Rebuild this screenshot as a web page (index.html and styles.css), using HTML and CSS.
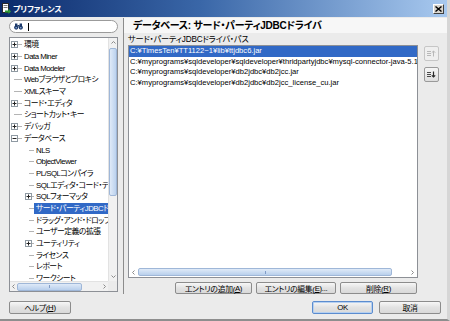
FILE: index.html
```html
<!DOCTYPE html>
<html lang="ja">
<head>
<meta charset="utf-8">
<title>プリファレンス</title>
<link rel="stylesheet" href="styles.css">
</head>
<body>
<div class="window">
  <div class="titlebar">
    <svg class="ticon" width="9" height="11" viewBox="0 0 9 11"><rect x="0.5" y="0.5" width="6" height="9" fill="#fff" stroke="#2a2a2a"/><rect x="1.5" y="2" width="4" height="1" fill="#7a7a7a"/><rect x="1.5" y="4" width="4" height="1" fill="#7a7a7a"/><path d="M3 7.5H6.5V5.5L9 8.5L6.5 11V9.5H3Z" fill="#2f9d37"/></svg>
    <span class="ttext">プリファレンス</span>
    <span class="close"><svg width="7" height="6" viewBox="0 0 7 6"><path d="M0.5 0.5L6.5 5.5M6.5 0.5L0.5 5.5" stroke="#000" stroke-width="1.4"/></svg></span>
  </div>

  <div class="main">
    <div class="left">
      <div class="search">
        <svg class="binoc" width="9" height="7" viewBox="0 0 9 7"><circle cx="2.2" cy="4.6" r="2.1" fill="#1d3a6b"/><circle cx="6.8" cy="4.6" r="2.1" fill="#1d3a6b"/><rect x="1" y="0.5" width="2.4" height="3" fill="#1d3a6b"/><rect x="5.6" y="0.5" width="2.4" height="3" fill="#1d3a6b"/><rect x="3.4" y="2" width="2.2" height="1.6" fill="#1d3a6b"/><circle cx="2.2" cy="4.8" r="0.8" fill="#8fb0e0"/><circle cx="6.8" cy="4.8" r="0.8" fill="#8fb0e0"/></svg>
        <span class="caret"></span>
      </div>
      <div class="tree">
        <div class="rows">
          <div class="row l0"><span class="tw"><svg class="box" viewBox="0 0 7 7"><rect x=".5" y=".5" width="6" height="6" fill="#fff" stroke="#8f9aa3"/><path d="M1.5 3.5h4M3.5 1.5v4" stroke="#222"/></svg><span class="leg"></span></span><span class="txt">環境</span></div>
          <div class="row l0"><span class="tw"><svg class="box" viewBox="0 0 7 7"><rect x=".5" y=".5" width="6" height="6" fill="#fff" stroke="#8f9aa3"/><path d="M1.5 3.5h4M3.5 1.5v4" stroke="#222"/></svg><span class="leg"></span></span><span class="txt">Data Miner</span></div>
          <div class="row l0"><span class="tw"><svg class="box" viewBox="0 0 7 7"><rect x=".5" y=".5" width="6" height="6" fill="#fff" stroke="#8f9aa3"/><path d="M1.5 3.5h4M3.5 1.5v4" stroke="#222"/></svg><span class="leg"></span></span><span class="txt">Data Modeler</span></div>
          <div class="row l0 leaf"><span class="tw"><span class="leg"></span></span><span class="txt">Webブラウザとプロキシ</span></div>
          <div class="row l0 leaf"><span class="tw"><span class="leg"></span></span><span class="txt">XMLスキーマ</span></div>
          <div class="row l0"><span class="tw"><svg class="box" viewBox="0 0 7 7"><rect x=".5" y=".5" width="6" height="6" fill="#fff" stroke="#8f9aa3"/><path d="M1.5 3.5h4M3.5 1.5v4" stroke="#222"/></svg><span class="leg"></span></span><span class="txt">コード・エディタ</span></div>
          <div class="row l0 leaf"><span class="tw"><span class="leg"></span></span><span class="txt">ショートカット・キー</span></div>
          <div class="row l0"><span class="tw"><svg class="box" viewBox="0 0 7 7"><rect x=".5" y=".5" width="6" height="6" fill="#fff" stroke="#8f9aa3"/><path d="M1.5 3.5h4M3.5 1.5v4" stroke="#222"/></svg><span class="leg"></span></span><span class="txt">デバッガ</span></div>
          <div class="row l0"><span class="tw"><svg class="box" viewBox="0 0 7 7"><rect x=".5" y=".5" width="6" height="6" fill="#fff" stroke="#8f9aa3"/><path d="M1.5 3.5h4" stroke="#222"/></svg><span class="leg"></span></span><span class="txt">データベース</span></div>
          <div class="row l1 leaf"><span class="tw"><span class="leg"></span></span><span class="txt">NLS</span></div>
          <div class="row l1 leaf"><span class="tw"><span class="leg"></span></span><span class="txt">ObjectViewer</span></div>
          <div class="row l1 leaf"><span class="tw"><span class="leg"></span></span><span class="txt">PL/SQLコンパイラ</span></div>
          <div class="row l1 leaf"><span class="tw"><span class="leg"></span></span><span class="txt clip">SQLエディタ・コード・テン</span></div>
          <div class="row l1"><span class="tw"><svg class="box" viewBox="0 0 7 7"><rect x=".5" y=".5" width="6" height="6" fill="#fff" stroke="#8f9aa3"/><path d="M1.5 3.5h4M3.5 1.5v4" stroke="#222"/></svg><span class="leg"></span></span><span class="txt">SQLフォーマッタ</span></div>
          <div class="row l1 leaf"><span class="tw"><span class="leg"></span></span><span class="txt sel clip">サード・パーティJDBCド</span></div>
          <div class="row l1 leaf"><span class="tw"><span class="leg"></span></span><span class="txt">ドラッグ・アンド・ドロップ</span></div>
          <div class="row l1 leaf"><span class="tw"><span class="leg"></span></span><span class="txt">ユーザー定義の拡張</span></div>
          <div class="row l1"><span class="tw"><svg class="box" viewBox="0 0 7 7"><rect x=".5" y=".5" width="6" height="6" fill="#fff" stroke="#8f9aa3"/><path d="M1.5 3.5h4M3.5 1.5v4" stroke="#222"/></svg><span class="leg"></span></span><span class="txt">ユーティリティ</span></div>
          <div class="row l1 leaf"><span class="tw"><span class="leg"></span></span><span class="txt">ライセンス</span></div>
          <div class="row l1 leaf"><span class="tw"><span class="leg"></span></span><span class="txt">レポート</span></div>
          <div class="row l1 leaf"><span class="tw"><span class="leg"></span></span><span class="txt">ワークシート</span></div>
        </div>
        <div class="vscroll">
          <span class="arr"><svg width="5" height="3" viewBox="0 0 5 3"><path d="M0.5 2.5L2.5 0.5L4.5 2.5" fill="none" stroke="#8a8a8a"/></svg></span>
          <span class="vtrack"><span class="vthumb"></span></span>
          <span class="arr"><svg width="5" height="3" viewBox="0 0 5 3"><path d="M0.5 0.5L2.5 2.5L4.5 0.5" fill="none" stroke="#8a8a8a"/></svg></span>
        </div>
        <div class="hscroll">
          <span class="harr"><svg width="3" height="5" viewBox="0 0 3 5"><path d="M2.5 0.5L0.5 2.5L2.5 4.5" fill="none" stroke="#8a8a8a"/></svg></span>
          <span class="htrack"><span class="hthumb tree-thumb"><span class="grip"></span></span></span>
          <span class="harr"><svg width="3" height="5" viewBox="0 0 3 5"><path d="M0.5 0.5L2.5 2.5L0.5 4.5" fill="none" stroke="#8a8a8a"/></svg></span>
        </div>
        <div class="corner"></div>
      </div>
    </div>

    <div class="right">
      <div class="header">データベース: サード・パーティJDBCドライバ</div>
      <div class="label">サード・パーティJDBCドライバ・パス</div>
      <div class="listarea">
        <div class="list">
          <div class="items">
            <div class="item selected">C:¥TimesTen¥TT1122~1¥lib¥ttjdbc6.jar</div>
            <div class="item">C:¥myprograms¥sqldeveloper¥sqldeveloper¥thridpartyjdbc¥mysql-connector-java-5.1.7-b</div>
            <div class="item">C:¥myprograms¥sqldeveloper¥db2jdbc¥db2jcc.jar</div>
            <div class="item">C:¥myprograms¥sqldeveloper¥db2jdbc¥db2jcc_license_cu.jar</div>
          </div>
          <div class="hscroll list-h">
            <span class="harr"><svg width="3" height="5" viewBox="0 0 3 5"><path d="M2.5 0.5L0.5 2.5L2.5 4.5" fill="none" stroke="#8a8a8a"/></svg></span>
            <span class="htrack"><span class="hthumb list-thumb"><span class="grip"></span></span></span>
            <span class="harr"><svg width="3" height="5" viewBox="0 0 3 5"><path d="M0.5 0.5L2.5 2.5L0.5 4.5" fill="none" stroke="#8a8a8a"/></svg></span>
          </div>
        </div>
        <div class="side">
          <span class="sbtn disabled"><svg width="9" height="7" viewBox="0 0 9 7"><path d="M0 1.5h4M0 3.5h4M0 5.5h4" stroke="#b8b8b8"/><path d="M6.5 6.5V1M4.8 2.7L6.5 1L8.2 2.7" fill="none" stroke="#b8b8b8"/></svg></span>
          <span class="sbtn"><svg width="9" height="7" viewBox="0 0 9 7"><path d="M0 1.5h4M0 3.5h4M0 5.5h4" stroke="#4a4a4a"/><path d="M6.5 0.5V6M4.8 4.3L6.5 6L8.2 4.3" fill="none" stroke="#2a2a2a" stroke-width="1.2"/></svg></span>
        </div>
      </div>
      <div class="actions">
        <span class="btn w-add">エントリの追加(<u>A</u>)</span>
        <span class="btn w-edit">エントリの編集(<u>E</u>)...</span>
        <span class="btn w-del">削除(<u>R</u>)</span>
      </div>
    </div>
  </div>

  <div class="footer">
    <span class="btn w-help">ヘルプ(<u>H</u>)</span>
    <span class="spacer"></span>
    <span class="btn default w-ok">OK</span>
    <span class="btn w-cancel">取消</span>
  </div>
</div>
</body>
</html>
```

FILE: styles.css
```css
* { box-sizing: border-box; margin: 0; padding: 0; }
html, body { width: 450px; height: 321px; overflow: hidden; }
body {
  font-family: "Liberation Sans", "Noto Sans CJK JP", sans-serif;
  font-size: 7.8px;
  color: #000;
  background: #ebebeb;
  font-feature-settings: "palt";
}
.window {
  width: 450px;
  height: 321px;
  display: flex;
  flex-direction: column;
  background: #ebebeb;
  border-right: 3px solid #d6d6d6;
  border-bottom: 2px solid #8e8e8e;
}

/* title bar */
.titlebar {
  height: 17px;
  flex: none;
  display: flex;
  align-items: center;
  padding: 0 3px 0 2px;
  background: linear-gradient(to right, #0b2a6b 0%, #3a67a8 45%, #a8c9ef 100%);
}
.ticon { flex: none; margin-right: 2px; }
.ttext {
  color: #fff;
  font-weight: bold;
  font-size: 8px;
  letter-spacing: -0.2px;
}
.close {
  margin-left: auto;
  width: 11px;
  height: 10px;
  background: #d8d5ce;
  border: 1px solid;
  border-color: #fff #404040 #404040 #fff;
  display: flex;
  align-items: center;
  justify-content: center;
}

/* main */
.main {
  flex: none;
  height: 279px;
  display: flex;
}
.left {
  width: 123px;
  flex: none;
  padding: 3px 0 0 9px;
  display: flex;
  flex-direction: column;
}
.search {
  width: 109px;
  height: 13px;
  border: 1px solid #9b9b9b;
  border-radius: 7px;
  background: #fff;
  display: flex;
  align-items: center;
  padding-left: 4px;
}
.binoc { flex: none; }
.caret {
  width: 1px;
  height: 8px;
  background: #000;
  margin-left: 5px;
}
.tree {
  margin-top: 4px;
  width: 109px;
  height: 255px;
  border: 1px solid #8d9096;
  background: #fff;
  display: grid;
  grid-template-columns: 98px 9px;
  grid-template-rows: 243px 10px;
}
.rows {
  overflow: hidden;
  padding-top: 1px;
}
.row {
  height: 11.7px;
  display: flex;
  align-items: center;
  white-space: nowrap;
  letter-spacing: -0.5px;
}
.tw {
  flex: none;
  display: flex;
  align-items: center;
}
.l0 { padding-left: 1px; }
.l0 .tw { width: 11px; }
.l1 { padding-left: 15px; }
.l1 .tw { width: 9px; }
.box { width: 7px; height: 7px; flex: none; }
.leg { flex: 1; height: 1px; background: #b4b4b4; }
.l0.leaf .tw { padding-left: 3px; }
.l1.leaf .tw { padding-left: 4px; }
.txt { padding: 0 2px; line-height: 11px; }
.txt.clip { flex: 1; min-width: 0; overflow: hidden; }
.txt.sel {
  background: #3169c6;
  color: #fff;
}

/* scrollbars */
.vscroll {
  display: flex;
  flex-direction: column;
  background: #f1f1f1;
  border-left: 1px solid #e2e2e2;
}
.arr {
  height: 9px;
  flex: none;
  display: flex;
  align-items: center;
  justify-content: center;
}
.vtrack { flex: 1; }
.vthumb {
  display: block;
  margin-top: 1px;
  height: 148px;
  width: 8px;
  border: 1px solid #9fb7d8;
  border-radius: 2px;
  background: linear-gradient(to right, #dfeaf8, #bcd2ee);
}
.hscroll {
  display: flex;
  align-items: center;
  background: #f1f1f1;
  border-top: 1px solid #e2e2e2;
}
.harr {
  width: 7px;
  flex: none;
  display: flex;
  justify-content: center;
}
.htrack { flex: 1; display: flex; align-items: center; height: 100%; }
.hthumb {
  height: 8px;
  border: 1px solid #9fb7d8;
  border-radius: 2px;
  background: linear-gradient(#dfeaf8, #b8cfec);
  display: flex;
  justify-content: center;
  align-items: center;
}
.grip { width: 1px; height: 3px; background: #7f9cc8; }
.tree-thumb { width: 65px; }
.corner { background: #ebebeb; }

/* right panel */
.right {
  flex: 1;
  border-left: 1px solid #8c8c8c;
  margin-top: 1px;
  height: 276px;
  display: flex;
  flex-direction: column;
  padding-left: 4px;
}
.header {
  height: 15px;
  background: #f7f7f7;
  margin-left: -4px;
  padding-left: 9px;
  font-weight: bold;
  font-size: 10px;
  letter-spacing: -0.3px;
  line-height: 15px;
}
.label {
  height: 12px;
  line-height: 11px;
  padding-top: 1px;
  font-size: 8.2px;
  letter-spacing: -0.2px;
}
.listarea {
  display: flex;
  gap: 6px;
}
.list {
  width: 290px;
  height: 233px;
  border: 1px solid #8d9096;
  background: #fff;
  display: flex;
  flex-direction: column;
}
.items { flex: 1; overflow: hidden; font-size: 7.6px; }
.item {
  height: 10.5px;
  line-height: 10.5px;
  padding-left: 1px;
  white-space: nowrap;
  overflow: hidden;
}
.item.selected { background: #3169c6; color: #fff; }
.list-h { height: 10px; flex: none; background: #fff; border-top: none; }
.list-h .harr { width: 9px; }
.list-thumb { width: 254px; }

.side {
  display: flex;
  flex-direction: column;
  gap: 6px;
  padding-top: 1px;
}
.sbtn {
  width: 15px;
  height: 15px;
  border: 1px solid #9a9a9a;
  border-radius: 2px;
  background: linear-gradient(#f6f6f6, #dedede);
  display: flex;
  align-items: center;
  justify-content: center;
}
.sbtn.disabled { border-color: #c6c6c6; background: #efefef; }

.actions {
  display: flex;
  gap: 4px;
  margin-top: 4px;
  padding-left: 47px;
}

/* buttons */
.btn {
  height: 12px;
  border: 1px solid #8c8c8c;
  border-radius: 2px;
  background: linear-gradient(#f7f7f7, #e2e2e2 50%, #d9d9d9);
  display: flex;
  align-items: center;
  justify-content: center;
  white-space: nowrap;
  letter-spacing: -0.3px;
}
.btn u { text-decoration: underline; }
.w-add { width: 77px; }
.w-edit { width: 80px; }
.w-del { width: 77px; }

.footer {
  flex: 1;
  display: flex;
  align-items: flex-start;
  padding: 5px 6px 0 9px;
  gap: 6px;
}
.footer .btn { height: 13px; }
.spacer { flex: 1; }
.w-help { width: 62px; }
.w-ok { width: 61px; }
.w-cancel { width: 62px; }
.btn.default { border-color: #5b8ccf; box-shadow: inset 0 0 0 1px #b6d0f0; }
```
